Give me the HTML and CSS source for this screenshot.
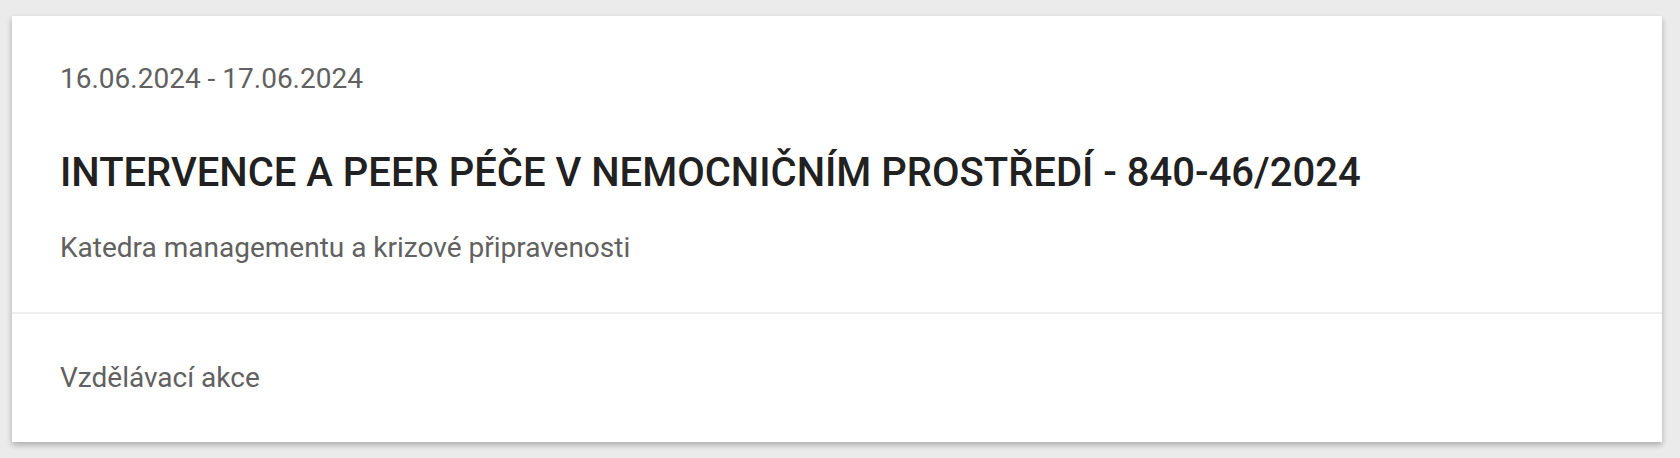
FILE: index.html
```
<html>
	<head>
		<meta charset="utf-8">
		<title>Vzdělávací akce</title>
		<link rel="stylesheet" href="styles.css">
	</head>
	<body>
		<div class="event-card">
			<div class="event-card-main">
				<div class="event-card-date">16.06.2024 - 17.06.2024</div>
				<div class="event-card-title">INTERVENCE A PEER PÉČE V NEMOCNIČNÍM PROSTŘEDÍ - 840-46/2024</div>
				<div class="event-card-dept">Katedra managementu a krizové připravenosti</div>
			</div>
			<div class="event-card-footer">Vzdělávací akce</div>
		</div>
	</body>
</html>
```
FILE: styles.css
```
body
{
	margin: 0px;
	padding: 16px 18px 16px 12px;
	background-color: #EBEBEB;
	font-family: Roboto, "Liberation Sans", Arial, sans-serif;
}

.event-card
{
	background-color: #FFFFFF;
	box-shadow: 0px 3px 6px rgba(0,0,0,.16), 0px 3px 6px rgba(0,0,0,.12);
}

.event-card-main
{
	padding: 45px 48px 46px 48px;
	border-bottom: 2px solid #EEEEEE;
}

.event-card-date
{
	font-size: 28px;
	line-height: 36px;
	color: #616161;
}

.event-card-title
{
	margin-top: 52px;
	font-size: 40px;
	font-weight: 500;
	line-height: 48px;
	color: #212121;
}

.event-card-dept
{
	margin-top: 33px;
	font-size: 28px;
	line-height: 36px;
	color: #616161;
}

.event-card-footer
{
	padding: 46px 48px 46px 48px;
	font-size: 28px;
	line-height: 36px;
	color: #616161;
}
```
